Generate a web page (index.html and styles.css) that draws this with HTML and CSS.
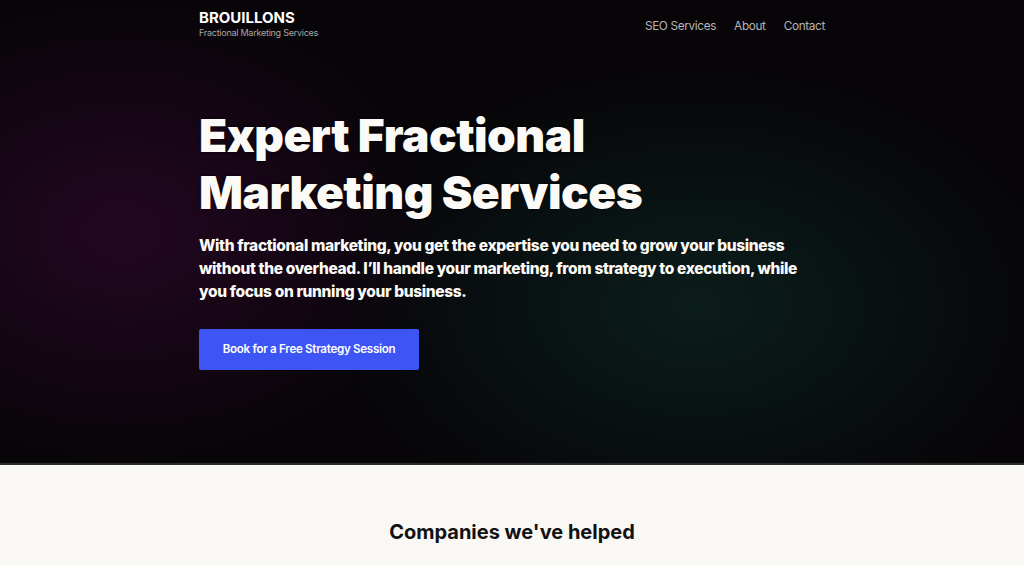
FILE: index.html
```html
<!DOCTYPE html>
<html lang="en">
<head>
<meta charset="utf-8">
<title>Brouillons - Fractional Marketing Services</title>
<link rel="stylesheet" href="styles.css">
</head>
<body>
<section class="hero">
  <div class="container">
    <header class="topbar">
      <a class="brand" href="#">
        <span class="brand-name">BROUILLONS</span>
        <span class="brand-tag">Fractional Marketing Services</span>
      </a>
      <nav class="nav">
        <a href="#">SEO Services</a>
        <a href="#">About</a>
        <a href="#">Contact</a>
      </nav>
    </header>
    <div class="hero-body">
      <h1 class="hero-title">Expert Fractional<br>Marketing Services</h1>
      <p class="hero-text">With fractional marketing, you get the expertise you need to grow your business without the overhead. I’ll handle your marketing, from strategy to execution, while you focus on running your business.</p>
      <a class="btn" href="#">Book for a Free Strategy Session</a>
    </div>
  </div>
</section>
<section class="clients">
  <h2 class="clients-title">Companies we've helped</h2>
</section>
</body>
</html>
```

FILE: styles.css
```css
* { box-sizing: border-box; }
html, body { margin: 0; padding: 0; }
body {
  font-family: Inter, "Noto Sans", "Liberation Sans", sans-serif;
  background: #f9f8f5;
  color: #111;
}
a { text-decoration: none; color: inherit; }

.hero {
  height: 465px;
  background:
    radial-gradient(ellipse 460px 340px at 12% 50%, rgba(55, 8, 50, 0.6), rgba(0,0,0,0) 70%),
    radial-gradient(ellipse 520px 340px at 68% 66%, rgba(14, 45, 40, 0.6), rgba(0,0,0,0) 70%),
    #070508;
  border-bottom: 2px solid #2a2a2a;
}
.container {
  width: 626px;
  margin: 0 auto;
}
.topbar {
  display: flex;
  justify-content: space-between;
  align-items: center;
  padding-top: 9px;
}
.brand { display: flex; flex-direction: column; }
.brand-name {
  color: #fff;
  font-weight: 700;
  font-size: 15px;
  line-height: 18px;
}
.brand-tag {
  color: #a8a8a8;
  font-size: 9px;
  line-height: 12px;
  letter-spacing: -0.25px;
}
.nav { display: flex; gap: 18px; padding-top: 4px; }
.nav a {
  color: #b5b5b5;
  font-size: 11.8px;
  letter-spacing: -0.35px;
}
.hero-body { padding-top: 68px; }
.hero-title {
  margin: 0;
  color: #fbfaf6;
  font-size: 46px;
  line-height: 57px;
  font-weight: 900;
  letter-spacing: -0.5px;
  text-shadow: 0 0 2px #000, 0 0 1px #000;
}
.hero-text {
  margin: 13px 0 0;
  color: #fbfaf6;
  font-size: 15.5px;
  line-height: 23px;
  font-weight: 800;
  letter-spacing: -0.35px;
}
.btn {
  display: inline-block;
  margin-top: 26px;
  width: 220px;
  height: 41px;
  line-height: 41px;
  text-align: center;
  background: #3d55f5;
  color: #fff;
  font-size: 11.6px;
  font-weight: 600;
  letter-spacing: -0.3px;
  border-radius: 2px;
}
.clients {
  padding-top: 55px;
  text-align: center;
}
.clients-title {
  margin: 0;
  font-size: 20px;
  font-weight: 700;
  color: #111;
}
```
